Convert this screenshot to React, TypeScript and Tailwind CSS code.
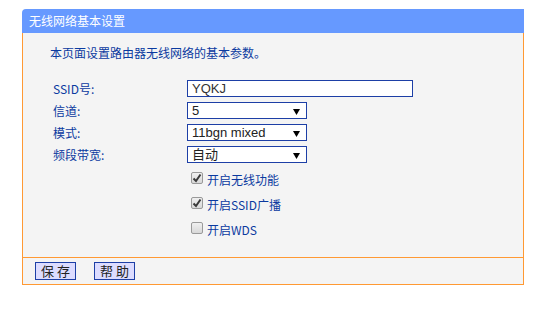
import React from 'react'

const font = '"Noto Sans CJK SC", "Liberation Sans", sans-serif'
const latin = '"Liberation Sans", "Noto Sans CJK SC", sans-serif'

function Arrow() {
  return (
    <svg width="7" height="6" viewBox="0 0 7 6" className="absolute right-[6px] top-[6px]">
      <path d="M0 0 H7 L3.5 6 Z" fill="#000" />
    </svg>
  )
}

function Select({ value }: { value: string }) {
  return (
    <div
      className="relative w-[120px] h-[17px] border border-[#1d3fa6] bg-white text-[13px] leading-[15px] pl-[4px] text-[#222]"
      style={{ fontFamily: latin }}
    >
      {value}
      <Arrow />
    </div>
  )
}

function Check({ checked, label }: { checked: boolean; label: string }) {
  return (
    <div className="flex items-center h-[24px] pl-[4px] gap-[4px]">
      <div className="w-[12px] h-[12px] rounded-[2px] border border-[#9a9a9a] bg-gradient-to-b from-[#f0f0f0] to-[#d8d8d8] flex items-center justify-center">
        {checked && (
          <svg width="10" height="10" viewBox="0 0 10 10">
            <path d="M1.5 5.5 L4 8 L8.5 1.5" stroke="#3a3a3a" strokeWidth="2" fill="none" />
          </svg>
        )}
      </div>
      <span className="text-[12px] text-[#0b3aa0] pt-[4px]">{label}</span>
    </div>
  )
}

function Row({ label, children }: { label: string; children: React.ReactNode }) {
  return (
    <div className="flex items-center h-[17px]">
      <div className="w-[137px] pl-[3px] text-[12px] text-[#0b3aa0]">{label}</div>
      {children}
    </div>
  )
}

function Btn({ text }: { text: string }) {
  return (
    <button className="w-[41px] h-[18px] border border-[#1d3fa6] bg-[#dcdcff] text-[13px] leading-[14px] tracking-[3px] pl-[3px] text-[#222]">
      {text}
    </button>
  )
}

export default function App() {
  return (
    <div className="w-[539px] h-[310px] bg-white pt-[9px] pl-[22px]" style={{ fontFamily: font }}>
      <div className="w-[502px]">
        <div className="h-[24px] bg-[#6699ff] rounded-tl-[4px] text-white text-[12px] pl-[7px] flex items-center">
          无线网络基本设置
        </div>
        <div className="h-[224px] bg-[#f4f4f4] border-x border-[#ff9933] pl-[27px] pt-[12px]">
          <p className="text-[12px] leading-[16px] text-[#0b3aa0]">本页面设置路由器无线网络的基本参数。</p>
          <div className="mt-[19px] flex flex-col gap-[5px]">
            <Row label="SSID号:">
              <div
                className="w-[226px] h-[17px] border border-[#1d3fa6] bg-white text-[13px] leading-[15px] pl-[4px] text-[#333]"
                style={{ fontFamily: latin }}
              >
                YQKJ
              </div>
            </Row>
            <Row label="信道:">
              <Select value="5" />
            </Row>
            <Row label="模式:">
              <Select value="11bgn mixed" />
            </Row>
            <Row label="频段带宽:">
              <Select value="自动" />
            </Row>
          </div>
          <div className="ml-[137px] mt-[3px] flex flex-col gap-[1px]">
            <Check checked label="开启无线功能" />
            <Check checked label="开启SSID广播" />
            <Check checked={false} label="开启WDS" />
          </div>
        </div>
        <div className="h-[28px] bg-[#f4f4f4] border border-[#ff9933] flex items-center pl-[12px] gap-[18px]">
          <Btn text="保存" />
          <Btn text="帮助" />
        </div>
      </div>
    </div>
  )
}
